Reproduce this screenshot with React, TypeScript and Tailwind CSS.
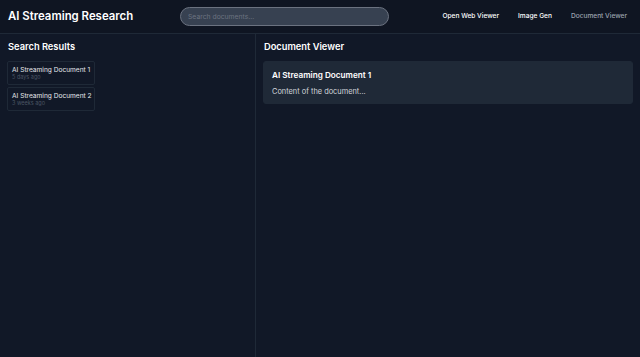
import React from 'react';

const results = [
  { title: 'AI Streaming Document 1', time: '5 days ago' },
  { title: 'AI Streaming Document 2', time: '3 weeks ago' },
];

const App = () => {
  return (
    <div className="h-[357px] w-[640px] flex flex-col bg-[#111827] text-white font-['Inter',sans-serif] overflow-hidden">
      {/* Header */}
      <header className="h-[34px] shrink-0 flex items-center border-b border-[#1f2937] bg-[#0f1522] pl-[8px] pr-[13px]">
        <h1 className="text-[11.4px] font-semibold leading-none w-[172px]">AI Streaming Research</h1>
        <input
          className="h-[19px] w-[209px] rounded-full border border-[#6b7280] bg-[#374151] px-[7px] text-[6.8px] text-white placeholder:text-[#6b7280] outline-none"
          placeholder="Search documents..."
        />
        <nav className="ml-auto flex items-center gap-[19px] text-[6.6px] font-medium">
          <span className="text-white">Open Web Viewer</span>
          <span className="text-white">Image Gen</span>
          <span className="text-[#9ca3af]">Document Viewer</span>
        </nav>
      </header>

      {/* Body */}
      <div className="flex flex-1 min-h-0">
        <aside className="w-[256px] shrink-0 border-r border-[#1f2937] px-[7px] pt-[8px]">
          <h2 className="text-[9.3px] font-semibold leading-none mb-[10px] pl-[1px]">Search Results</h2>
          <div className="flex flex-col gap-[2px]">
            {results.map((r, i) => (
              <div key={i} className="w-[88px] h-[24px] rounded-[2px] border border-[#1f2937] px-[4px] pt-[4px]">
                <div className="text-[6.6px] leading-[8px] text-[#e5e7eb] whitespace-nowrap">{r.title}</div>
                <div className="text-[5.5px] leading-[7px] text-[#4b5563]">{r.time}</div>
              </div>
            ))}
          </div>
        </aside>

        <main className="flex-1 pl-[7px] pr-[7px] pt-[8px]">
          <h2 className="text-[9.3px] font-semibold leading-none mb-[10px] pl-[1px]">Document Viewer</h2>
          <div className="h-[43px] rounded-[3px] border border-[#1f2937] bg-[#1f2937] px-[8px] pt-[9px]">
            <div className="text-[8.2px] font-semibold leading-none">AI Streaming Document 1</div>
            <div className="mt-[8px] text-[7.4px] leading-none text-[#d1d5db]">Content of the document...</div>
          </div>
        </main>
      </div>
    </div>
  );
};

export default App;
